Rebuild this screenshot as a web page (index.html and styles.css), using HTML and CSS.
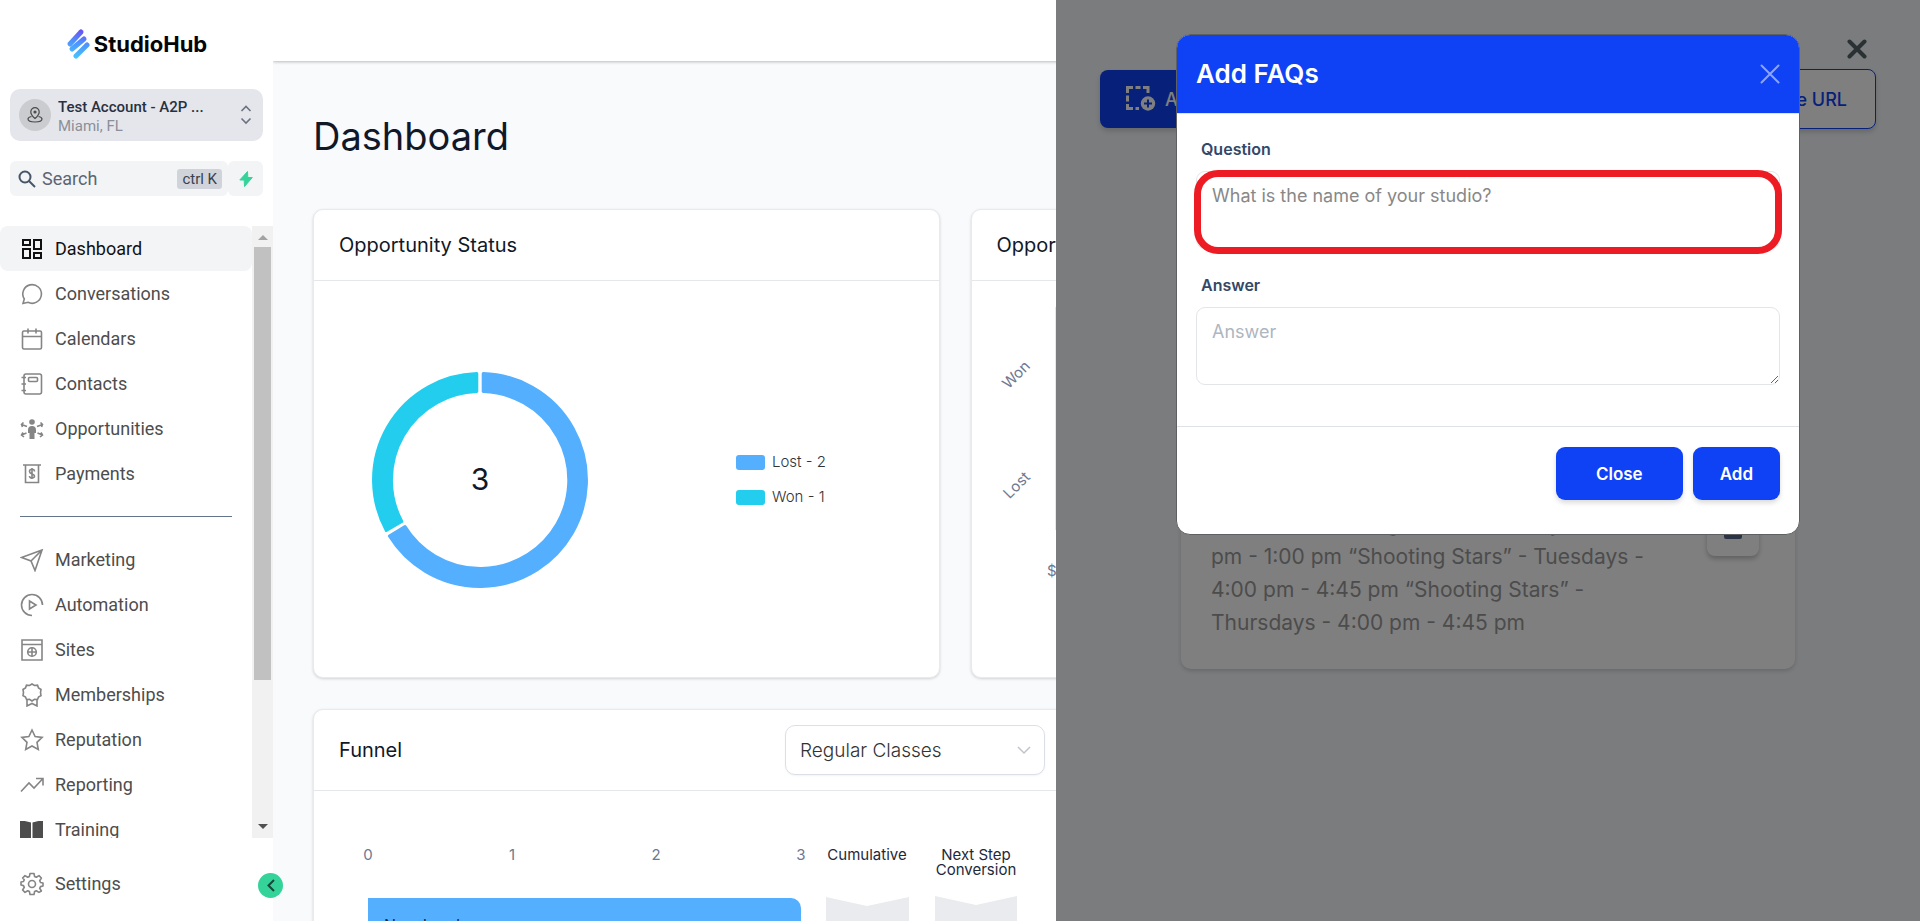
FILE: index.html
```html
<!DOCTYPE html>
<html lang="en">
<head>
<meta charset="utf-8">
<title>StudioHub - Dashboard</title>
<link rel="stylesheet" href="styles.css">
</head>
<body>
<div class="app">
  <aside class="sidebar">
    <div class="brand">
      <svg width="24" height="34" viewBox="0 0 24 34" aria-hidden="true">
        <defs><linearGradient id="brand-fill" gradientUnits="userSpaceOnUse" x1="14" y1="2" x2="8" y2="32"><stop offset="0" stop-color="#6a4df5"/><stop offset=".45" stop-color="#4f93fa"/><stop offset="1" stop-color="#45c8fd"/></linearGradient></defs>
        <g stroke="url(#brand-fill)" stroke-width="5" stroke-linecap="round" fill="none"><path d="M4 17 15 5"/><path d="M6 22 18 12"/><path d="M10 29 21 18"/></g>
      </svg>
      <span class="brand-name">StudioHub</span>
    </div>

    <button class="account" type="button">
      <span class="account-pin">
        <svg width="16" height="16" viewBox="0 0 16 16" fill="none" stroke="#4a4a4a" stroke-width="1.2" aria-hidden="true"><path d="M8 11.5S3.800 7.800 3.800 4.900a4.200 4.200 0 0 1 8.400 0C12.200 7.800 8 11.500 8 11.500Z"/><circle cx="8" cy="5" r="1" fill="#4a4a4a"/><path d="M4.500 9.500C2.500 9.900 1 10.900 1 12c0 1.700 3.100 3 7 3s7-1.300 7-3c0-1.100-1.500-2.100-3.500-2.500"/></svg>
      </span>
      <span class="account-text"><span class="account-name">Test Account - A2P ...</span><span class="account-place">Miami, FL</span></span>
      <svg width="12" height="20" viewBox="0 0 12 20" fill="none" stroke="#6b7280" stroke-width="1.600" aria-hidden="true"><path d="m1.500 6 4.500-4.500L10.500 6M1.500 13.500 6 18l4.500-4.500"/></svg>
    </button>

    <div class="search-row">
      <label class="search">
        <svg width="18" height="18" viewBox="0 0 18 18" fill="none" stroke="#475569" stroke-width="2" aria-hidden="true"><circle cx="7" cy="7" r="5.500"/><path d="m11 11 6 6"/></svg>
        <input class="search-input" type="text" placeholder="Search" aria-label="Search">
        <kbd class="search-key">ctrl K</kbd>
      </label>
      <button class="bolt" type="button" aria-label="Quick actions"><svg width="14" height="16" viewBox="0 0 14 16" aria-hidden="true"><path d="M8.500.5.8 9h4.400l.3 6.500L13.300 6.500H8.800Z" fill="#34d399" stroke="#34d399" stroke-linejoin="round"/></svg></button>
    </div>

    <div class="nav-scroll">
      <nav class="nav">
        <a class="nav-item active" href="#"><svg class="nav-icon" viewBox="0 0 24 24"><path d="M3 3h7v5H3zM14 3h7v9h-7zM3 12h7v9H3zM14 16h7v5h-7z"/></svg>Dashboard</a>
        <a class="nav-item" href="#"><svg class="nav-icon" viewBox="0 0 24 24"><path d="M3 21.500 4.300 17A9.300 9.300 0 1 1 8 20.300Z"/></svg>Conversations</a>
        <a class="nav-item" href="#"><svg class="nav-icon" viewBox="0 0 24 24"><rect x="2.500" y="4" width="19" height="18" rx="1.500"/><path d="M2.500 9.500h19M8 1.500v5M16 1.500v5"/></svg>Calendars</a>
        <a class="nav-item" href="#"><svg class="nav-icon" viewBox="0 0 24 24"><rect x="4" y="2" width="17.500" height="20" rx="2"/><rect x="8.500" y="5.500" width="9" height="4" rx="1"/><path d="M1.500 5.500H6M1.500 12H6M1.500 18.500H6"/></svg>Contacts</a>
        <a class="nav-item" href="#"><svg class="nav-icon" viewBox="0 0 24 24"><g fill="#858585" stroke="none"><circle cx="12" cy="5" r="2.800"/><path d="M8 13a4 4 0 0 1 8 0v3h-1.500v6h-5v-6H8Z"/></g><path d="M7 9.500 1.500 7.500M3.500 5.500l-2 2 1 2.500M17 9.500l5.500-2M20.500 5.500l2 2-1 2.500M6.500 16 1.500 18M3 15.500 1.500 18l2.500 2M17.500 16l5 2M21 15.500l1.500 2.500-2.500 2"/></svg>Opportunities</a>
        <a class="nav-item" href="#"><svg class="nav-icon" viewBox="0 0 24 24"><path d="M3 3h18M5.500 3v17.500h13V3M14.500 9.500c0-3-5-3-5 0s5 2 5 4.500-5 3-5 0M12 6v11"/></svg>Payments</a>
        <hr class="nav-rule">
        <a class="nav-item" href="#"><svg class="nav-icon" viewBox="0 0 24 24"><path d="M22 2 1.500 9.500 11 13l4 9.500ZM22 2 11 13"/></svg>Marketing</a>
        <a class="nav-item" href="#"><svg class="nav-icon" viewBox="0 0 24 24"><path d="M12 22.500A10.500 10.500 0 1 1 22.500 12M9.500 8v8l6.500-4Z"/></svg>Automation</a>
        <a class="nav-item" href="#"><svg class="nav-icon" viewBox="0 0 24 24"><path d="M2 2h20v20H2zM2 6.500h20"/><circle cx="12" cy="14" r="4.300"/><path d="M7.700 14h8.600M12 9.700v8.600"/></svg>Sites</a>
        <a class="nav-item" href="#"><svg class="nav-icon" viewBox="0 0 24 24"><path d="m12 1 2.500 1.500 3-.3 1 2.700 2.500 1.600L20.500 9.500 21 12.500l-2.500 1.500-1 2.500-3-.2L12 18l-2.500-1.700-3 .2-1-2.500L3 12.500l.5-3L3 6.500l2.500-1.600 1-2.700 3 .3ZM7 16.500V23l5-2.500 5 2.500v-6.500"/></svg>Memberships</a>
        <a class="nav-item" href="#"><svg class="nav-icon" viewBox="0 0 24 24"><path d="m12 2 3.100 6.500 7 .9-5.100 4.900 1.300 7.200L12 18l-6.300 3.500L7 14.300 1.900 9.400l7-.9Z"/></svg>Reputation</a>
        <a class="nav-item" href="#"><svg class="nav-icon" viewBox="0 0 24 24"><path d="m1 18.500 8-8.500 5 5L22.500 6M16 5.500h7v7"/></svg>Reporting</a>
        <a class="nav-item" href="#"><svg class="nav-icon" viewBox="0 0 24 24"><path fill="#4d4d4d" stroke="none" d="M0 3c4-.3 8 .2 11 1.500v17C8 20.200 4 19.600 0 20ZM23 3c-4-.3-7.500.2-10.500 1.500v17c3-1.300 6.500-1.900 10.500-1.500Z"/></svg>Training</a>
      </nav>
      <div class="rail" aria-hidden="true">
        <svg width="10" height="5" viewBox="0 0 10 5"><path d="M0 5 5 0l5 5Z" fill="#a3a3a3"/></svg>
        <div class="rail-track"><div class="rail-thumb"></div></div>
        <svg width="10" height="5" viewBox="0 0 10 5"><path d="M0 0h10L5 5Z" fill="#505050"/></svg>
      </div>
    </div>

    <div class="settings">
      <a class="nav-item" href="#"><svg class="nav-icon" viewBox="0 0 24 24"><circle cx="12" cy="12" r="3.500"/><path d="M10 1.500h4l.6 3 1.700.8L19 3.600 21.400 6l-1.700 2.700.8 1.800 2.500.5v3l-2.500.6-.8 1.700L21.400 19 19 20.400l-2.700-1.700-1.700.8-.6 3h-4l-.6-3-1.700-.8L5 20.400 2.600 18l1.700-2.700-.8-1.700L1 13v-3l2.500-.5.8-1.800L2.600 6 5 3.600l2.700 1.700 1.700-.8Z" stroke-linejoin="round"/></svg>Settings</a>
      <button class="collapse" type="button" aria-label="Collapse menu"><svg width="8" height="13" viewBox="0 0 8 13" fill="none" stroke="#17493c" stroke-width="2" aria-hidden="true"><path d="M7 1 1.500 6.500 7 12"/></svg></button>
    </div>
  </aside>

  <main class="main">
    <header class="topbar"></header>
    <div class="content">
      <h1 class="title">Dashboard</h1>
      <div class="grid">
        <section class="card card-five">
          <header class="card-head"><h2 class="card-title">Opportunity Status</h2></header>
          <div class="status">
            <svg width="218" height="218" viewBox="-109 -109 218 218" role="img" aria-label="Lost 2, won 1">
              <g stroke-width="3" stroke-linejoin="round">
                <path fill="#54afff" stroke="#54afff" d="M3.200-106.500A106.500 106.500 0 1 1-90.600 56L-75 46.500A88.500 88.500 0 1 0 3.200-88.500Z"/>
                <path fill="#22cdee" stroke="#22cdee" d="M-3.200-106.500A106.500 106.500 0 0 0-93.700 50.500L-78.200 41.500A88.500 88.500 0 0 1-3.200-88.500Z"/>
              </g>
              <text class="status-total" y="10" text-anchor="middle">3</text>
            </svg>
            <ul class="legend">
              <li class="legend-item"><span class="swatch swatch-lost"></span>Lost - 2</li>
              <li class="legend-item"><span class="swatch swatch-won"></span>Won - 1</li>
            </ul>
          </div>
        </section>

        <section class="card card-five">
          <header class="card-head"><h2 class="card-title">Opportunity Value</h2></header>
          <svg class="axis-chart" width="560" height="390" viewBox="0 0 560 390">
            <path d="M83.500 26v223" stroke="#e5e7eb"/>
            <text class="tick" transform="translate(59 86) rotate(-45)" text-anchor="end">Won</text>
            <text class="tick" transform="translate(59 197) rotate(-45)" text-anchor="end">Lost</text>
            <text class="tick" x="75" y="295">$0</text>
          </svg>
        </section>

        <section class="card card-six">
          <header class="card-head card-head-tall">
            <h2 class="card-title">Funnel</h2>
            <select class="picker" aria-label="Funnel"><option>Regular Classes</option></select>
          </header>
          <svg class="funnel-chart" width="730" height="240" viewBox="0 0 730 240">
            <g class="tick" text-anchor="middle"><text x="54" y="69">0</text><text x="198" y="69">1</text><text x="342" y="69">2</text><text x="487" y="69">3</text></g>
            <g class="column-name" text-anchor="middle"><text x="553" y="69">Cumulative</text><text x="662" y="69">Next Step</text><text x="662" y="84">Conversion</text></g>
            <path d="M54 107h423a10 10 0 0 1 10 10v90H54Z" fill="#54afff"/>
            <text class="bar-name" x="70" y="140">New Lead</text>
            <path d="m512 106 41 9 42-9v90h-83ZM621 105l41 9 41-9v91h-82Z" fill="#eaebef"/>
          </svg>
        </section>
      </div>
    </div>
  </main>

  <aside class="drawer">
    <div class="drawer-page">
      <div class="tools">
        <button class="tool tool-solid" type="button"><svg width="30" height="26" viewBox="0 0 30 26" fill="none" stroke="#fff" aria-hidden="true"><path stroke-width="3" d="M1.500 7V1.500H7M9.500 1.500h5M17 1.500h5V7M1.500 9.500v6M1.500 18v4.500H7M9.500 22.500H13"/><circle cx="22" cy="17.500" r="7.200" fill="#fff" stroke="none"/><path stroke="#0f42f5" stroke-width="2" d="M18 17.500h8M22 13.500v8"/></svg>Add FAQs</button>
        <button class="tool tool-line" type="button">Youtube URL</button>
      </div>
      <div class="answers">
        <article class="answer-card">
          <p class="answer-text">pm “Little Shooting Stars” - Sundays<br>pm - 1:00 pm “Shooting Stars” - Tuesdays -<br>4:00 pm - 4:45 pm “Shooting Stars” -<br>Thursdays - 4:00 pm - 4:45 pm</p>
          <button class="trash" type="button" aria-label="Delete"><svg width="20" height="24" viewBox="0 0 20 24" fill="#57698a" aria-hidden="true"><path d="M1 2h6l1-2h4l1 2h6v3H1ZM1 6h18v16a2 2 0 0 1-2 2H3a2 2 0 0 1-2-2Z"/></svg></button>
        </article>
      </div>
    </div>
    <div class="shade"></div>
    <button class="drawer-close" type="button" aria-label="Close panel"><svg width="20" height="20" viewBox="0 0 20 20" stroke="#293133" stroke-width="4" stroke-linecap="round" aria-hidden="true"><path d="m2.500 2.500 15 15M17.500 2.500l-15 15"/></svg></button>

    <form class="modal" role="dialog" aria-labelledby="modal-title">
      <header class="modal-head">
        <h2 class="modal-title" id="modal-title">Add FAQs</h2>
        <button class="modal-x" type="button" aria-label="Close dialog"><svg width="20" height="20" viewBox="0 0 20 20" stroke="#8ca4fb" stroke-width="2" stroke-linecap="round" aria-hidden="true"><path d="m1.500 1.500 17 17M18.500 1.500l-17 17"/></svg></button>
      </header>
      <div class="modal-body">
        <div class="field">
          <label class="field-label" for="question">Question</label>
          <div class="field-box marked"><textarea class="field-input field-question" id="question" placeholder="What is the name of your studio?"></textarea></div>
        </div>
        <div class="field">
          <label class="field-label" for="answer">Answer</label>
          <div class="field-box"><textarea class="field-input" id="answer" placeholder="Answer"></textarea></div>
        </div>
      </div>
      <footer class="modal-foot">
        <button class="action action-wide" type="button">Close</button>
        <button class="action" type="button">Add</button>
      </footer>
    </form>
  </aside>
</div>
</body>
</html>
```
FILE: styles.css
```css
* { box-sizing: border-box; }
body { margin: 0; font-family: Inter, "Liberation Sans", sans-serif; color: #111827; }
button, input, select, textarea { font: inherit; }
button { border: 0; cursor: pointer; }
h1, h2, p, ul { margin: 0; padding: 0; }
svg { flex: none; }

.app { display: flex; height: 100vh; overflow: hidden; position: relative; }

/* Sidebar */
.sidebar { flex: 0 0 273px; min-width: 0; display: flex; flex-direction: column; background: #fff; font-family: Roboto, sans-serif; z-index: 1; }
.brand { display: flex; align-items: center; justify-content: center; gap: 4px; height: 89px; padding-bottom: 2px; }
.brand-name { font: 700 22px/32px Inter, sans-serif; color: #050505; }
.account { display: flex; align-items: center; gap: 7px; height: 52px; margin: 0 10px; padding: 0 11px 0 9px; border-radius: 10px; background: #e5e6eb; text-align: left; }
.account-pin { display: grid; place-items: center; width: 32px; height: 32px; border-radius: 50%; background: #cbcccf; }
.account-text { flex: 1; display: flex; flex-direction: column; padding-top: 4px; white-space: nowrap; }
.account-name { font-size: 15px; line-height: 19px; font-weight: 500; color: #273142; }
.account-place { font-size: 15px; line-height: 19px; color: #8a8f98; }
.search-row { display: flex; margin: 20px 10px 30px; }
.search { flex: 1; min-width: 0; display: flex; align-items: center; gap: 6px; height: 35px; padding: 0 6px 0 8px; border-radius: 6px; background: #f3f4f6; }
.search-input { flex: 1; min-width: 0; padding: 0; border: 0; background: none; font-size: 18px; color: #4b5563; }
.search-input::placeholder { color: #5b6573; opacity: 1; }
.search-key { padding: 0 5px; border-radius: 3px; background: #d1d3da; font: 15px/20px Roboto, sans-serif; color: #374151; white-space: nowrap; }
.bolt { display: grid; place-items: center; width: 35px; padding: 0; border-radius: 6px; background: #f3f4f6; }
.nav-scroll { flex: 1; min-height: 0; display: flex; overflow: hidden; }
.nav { flex: 1; }
.nav-item { display: flex; align-items: center; gap: 11px; height: 45px; padding-left: 20px; border-radius: 8px; font-size: 18px; color: #4d4d4d; text-decoration: none; }
.nav-item.active { background: #f3f4f6; color: #111; }
.nav-icon { width: 24px; height: 24px; fill: none; stroke: #858585; stroke-width: 1.6; }
.active .nav-icon { stroke: #111; stroke-width: 2; }
.nav-rule { height: 1px; margin: 20px; border: 0; background: #64748b; }
.rail { width: 21px; display: flex; flex-direction: column; align-items: center; padding: 9px 0; background: #f1f1f1; }
.rail-track { align-self: stretch; flex: 1; margin: 7px 2px; }
.rail-thumb { height: 76%; background: #c1c1c1; }
.settings { position: relative; padding: 23px 0 15px; }
.collapse { position: absolute; right: -10px; top: 35px; display: grid; place-items: center; width: 25px; height: 25px; padding: 0; border-radius: 50%; background: #34d399; }

/* Dashboard */
.main { flex: 1; min-width: 0; display: flex; flex-direction: column; background: #f9fafc; }
.topbar { flex: 0 0 61px; background: #fff; box-shadow: 0 1px 3px rgba(0, 0, 0, .25); }
.content { flex: 1; min-height: 0; padding: 47px 60px 0 40px; overflow: hidden; }
.title { margin-bottom: 45px; font-size: 38px; line-height: 56px; font-weight: 400; }
.grid { display: grid; grid-template-columns: repeat(12, 1fr); gap: 31px; }
.card { min-width: 0; border: 1px solid #e8eaed; border-radius: 10px; background: #fff; box-shadow: 0 1px 3px rgba(0, 0, 0, .16); overflow: hidden; }
.card-five { grid-column: span 5; height: 469px; }
.card-six { grid-column: 1 / span 6; }
.card-head { display: flex; align-items: center; justify-content: space-between; height: 71px; padding: 0 25px; border-bottom: 1px solid #e5e7eb; }
.card-head-tall { height: 81px; }
.card-title { font-size: 20px; line-height: 28px; font-weight: 400; }
.status { display: flex; align-items: center; height: 397px; padding-left: 57px; gap: 147px; }
.status-total { font-size: 30px; fill: #111827; }
.legend { display: grid; gap: 15px; list-style: none; }
.legend-item { display: flex; align-items: center; gap: 7px; font-size: 15px; line-height: 20px; font-weight: 300; color: #333; }
.swatch { width: 29px; height: 15px; border-radius: 3px; }
.swatch-lost { background: #54afff; }
.swatch-won { background: #22cdee; }
.tick { font-size: 15px; fill: #6e7891; }
.column-name { font-size: 15px; fill: #1e293b; }
.bar-name { font-size: 16px; fill: #1e293b; }
.axis-chart, .funnel-chart { display: block; }
.picker { appearance: none; width: 260px; height: 50px; padding: 0 14px; border: 1px solid #dcdfe6; border-radius: 10px; font-size: 19px; font-weight: 300; color: #333; box-shadow: 0 1px 2px rgba(0, 0, 0, .05); background: #fff url("data:image/svg+xml,%3Csvg xmlns='http://www.w3.org/2000/svg' width='14' height='9' fill='none' stroke='%23c0c4cc' stroke-width='1.5'%3E%3Cpath d='m1 1 6 6 6-6'/%3E%3C/svg%3E") no-repeat right 13px center; }

/* Drawer and dialog */
.drawer { position: absolute; inset: 0 0 0 auto; width: 45%; background: #f6f8fa; z-index: 2; }
.drawer-page { height: 100%; }
.tools { display: flex; justify-content: space-between; align-items: center; padding: 69px 44px 0; }
.tool { display: flex; align-items: center; gap: 9px; height: 58px; padding: 0 26px; border-radius: 8px; font-size: 18px; font-weight: 500; box-shadow: 0 3px 5px rgba(0, 0, 0, .16); }
.tool-solid { background: #0f42f5; color: #fff; }
.tool-line { height: 60px; padding: 0 28px; border: 1px solid #0f42f5; background: #fff; color: #0f42f5; }
.answers { padding: 348px 125px 0; }
.answer-card { display: flex; justify-content: space-between; align-items: flex-start; padding: 30px 36px 30px 30px; border-radius: 10px; background: #fff; box-shadow: 0 2px 4px rgba(0, 0, 0, .16); }
.answer-text { font-size: 21px; line-height: 33px; color: #999; }
.trash { display: grid; place-items: start center; width: 52px; height: 49px; padding: 8px 0; border-radius: 8px; background: #fff; box-shadow: 0 3px 5px rgba(0, 0, 0, .24); }
.shade { position: absolute; inset: 0; background: rgba(0, 0, 0, .5); }
.drawer-close { position: absolute; top: 39px; right: 53px; padding: 0; background: none; line-height: 0; }
.modal { position: absolute; top: 34px; left: 120px; right: 120px; border: 1px solid #5f6062; border-radius: 14px; background: #fff; overflow: hidden; }
.modal-head { display: flex; align-items: center; justify-content: space-between; height: 79px; padding: 0 19px; background: #0f42f5; border-bottom: 1px solid #dee2e6; }
.modal-title { font-size: 26px; line-height: 32px; font-weight: 600; color: #fff; }
.modal-x { padding: 0; background: none; line-height: 0; }
.modal-body { display: grid; gap: 24px; padding: 23px 19px 41px; }
.field { display: grid; gap: 10px; }
.field-label { padding-left: 5px; font-size: 16px; line-height: 24px; font-weight: 600; color: #344767; }
.field-box { position: relative; display: flex; }
.field-input { flex: 1; min-width: 0; height: 78px; padding: 12px 15px; border: 1px solid #e3e5e8; border-radius: 9px; font-size: 18px; line-height: 24px; resize: vertical; background: #fff; }
.field-input::placeholder { color: #aeb6bf; opacity: 1; }
.field-question { resize: none; }
.field-question::placeholder { color: #888; }
.marked::after { content: ""; position: absolute; inset: -1px -2px -5px; border: 7px solid #ed1c24; border-radius: 24px; pointer-events: none; }
.modal-foot { display: flex; justify-content: flex-end; gap: 10px; padding: 20px 19px 34px; border-top: 1px solid #dee2e6; }
.action { height: 53px; padding: 0 27px; border-radius: 9px; background: #0f42f5; color: #fff; font-size: 17px; font-weight: 600; box-shadow: 0 3px 5px rgba(0, 0, 0, .14); }
.action-wide { padding: 0 40px; }
```
